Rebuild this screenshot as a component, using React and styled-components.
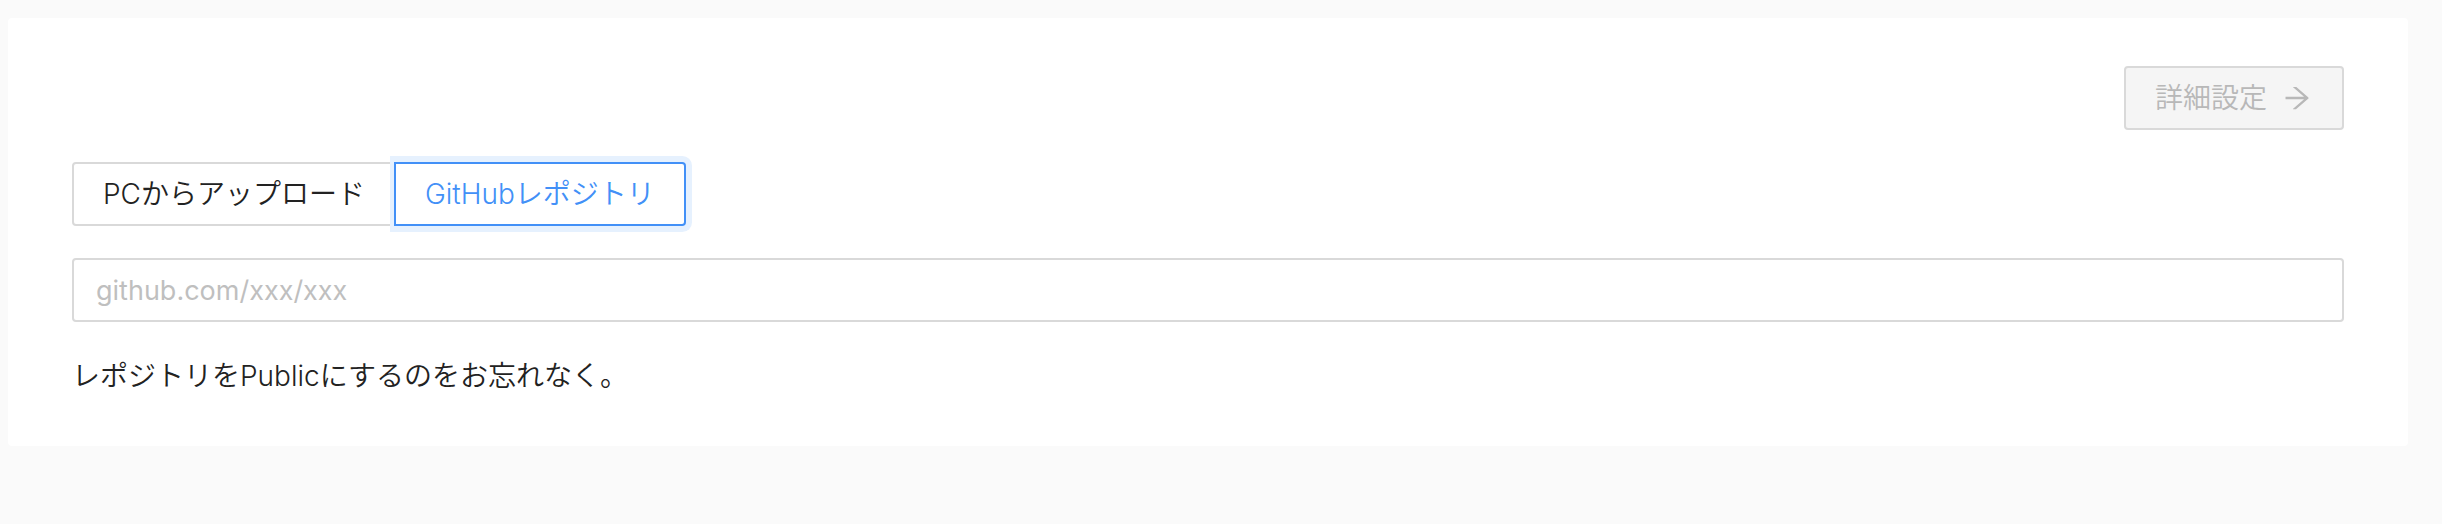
import React, { useState } from "react";
import styled, { createGlobalStyle, css } from "styled-components";

const fontStack = `Inter, "Noto Sans CJK JP", sans-serif`;

const GlobalStyle = createGlobalStyle`
  *, *::before, *::after {
    box-sizing: border-box;
  }
  body {
    margin: 0;
    background: #fafafa;
    color: #222;
    font-family: ${fontStack};
    font-size: 28px;
    font-weight: 350;
    line-height: 44px;
  }
`;

const Page = styled.main`
  padding: 18px 34px 32px 8px;
`;

const Card = styled.form`
  display: flex;
  flex-direction: column;
  gap: 32px;
  padding: 48px 64px;
  background: #fff;
  border-radius: 4px;
`;

const Actions = styled.div`
  display: flex;
  justify-content: flex-end;
`;

const controlFrame = css`
  height: 64px;
  border: 2px solid #d9d9d9;
  font: inherit;
`;

const NextButton = styled.button`
  ${controlFrame}
  display: inline-flex;
  align-items: center;
  gap: 14px;
  padding: 0 29px;
  border-radius: 4px;
  background: #fff;
  color: #222;
  cursor: pointer;

  &:disabled {
    background: #f5f5f5;
    color: #b8b8b8;
    cursor: not-allowed;
  }
`;

const ArrowIcon = styled.svg`
  width: 32px;
  height: 32px;
  fill: currentColor;
`;

const SourceGroup = styled.div`
  display: flex;
`;

const HiddenRadio = styled.input`
  position: absolute;
  inset: 0;
  margin: 0;
  opacity: 0;
  cursor: pointer;
`;

const SourceOption = styled.label`
  ${controlFrame}
  position: relative;
  display: flex;
  align-items: center;
  padding: 0 29px;
  background: #fff;
  white-space: nowrap;
  cursor: pointer;

  &:first-child {
    border-radius: 4px 0 0 4px;
  }
  &:not(:first-child) {
    border-left: 0;
  }
  &:last-child {
    border-radius: 0 4px 4px 0;
  }
  &:has(:checked) {
    z-index: 1;
    border-color: #4290f7;
    color: #4290f7;
    box-shadow: -2px 0 0 0 #4290f7, 0 0 0 6px #e6f1fe;
  }
`;

const RepositoryInput = styled.input`
  ${controlFrame}
  width: 100%;
  padding: 0 22px;
  border-radius: 4px;
  background: #fff;
  color: inherit;
  font-size: 27px;
  font-weight: 400;
  outline: none;

  &::placeholder {
    color: #bfbfbf;
    opacity: 1;
  }
`;

const Note = styled.p`
  margin: 0;
`;

const sources = [
  { value: "pc", label: "PCからアップロード" },
  { value: "github", label: "GitHubレポジトリ" },
];

export default function App() {
  const [source, setSource] = useState("github");
  const [repository, setRepository] = useState("");

  return (
    <>
      <GlobalStyle />
      <Page>
        <Card onSubmit={(event) => event.preventDefault()}>
          <Actions>
            <NextButton type="submit" disabled={!repository}>
              詳細設定
              <ArrowIcon viewBox="0 0 1024 1024" aria-hidden="true">
                <path d="M869 487.8L491.2 159.9c-2.9-2.5-6.6-3.9-10.5-3.9h-88.5c-7.4 0-10.8 9.2-5.2 14l350.2 304H152c-4.4 0-8 3.6-8 8v60c0 4.4 3.6 8 8 8h585.1L386.9 854c-5.6 4.9-2.2 14 5.2 14h91.5c1.9 0 3.8-.7 5.2-2L869 536.2a32 32 0 0 0 0-48.4z" />
              </ArrowIcon>
            </NextButton>
          </Actions>
          <SourceGroup role="radiogroup" aria-label="アップロード">
            {sources.map(({ value, label }) => (
              <SourceOption key={value}>
                <HiddenRadio
                  type="radio"
                  name="source"
                  value={value}
                  checked={source === value}
                  onChange={() => setSource(value)}
                />
                {label}
              </SourceOption>
            ))}
          </SourceGroup>
          <RepositoryInput
            type="text"
            placeholder="github.com/xxx/xxx"
            aria-label="GitHubレポジトリ"
            aria-describedby="repository-note"
            value={repository}
            onChange={(event) => setRepository(event.target.value)}
          />
          <Note id="repository-note">レポジトリをPublicにするのをお忘れなく。</Note>
        </Card>
      </Page>
    </>
  );
}
